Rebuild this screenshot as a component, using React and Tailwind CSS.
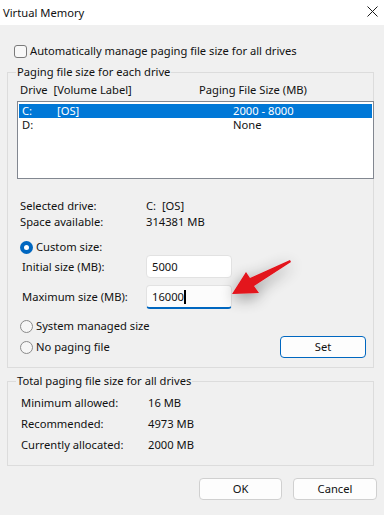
function Radio({ checked }) {
  return checked ? (
    <span className="w-[13px] h-[13px] rounded-full bg-[#0067c0] flex items-center justify-center shrink-0">
      <span className="w-[5px] h-[5px] rounded-full bg-white" />
    </span>
  ) : (
    <span className="w-[13px] h-[13px] rounded-full border border-[#8a8a8a] bg-[#f6f6f6] shrink-0" />
  )
}

function Group({ title, className, children }) {
  return (
    <div className={`relative ml-[7px] w-[367px] border border-[#dcdcdc] ${className}`}>
      <span className="absolute -top-[9px] left-[8px] bg-[#f0f0f0] px-[1px] leading-[16px]">{title}</span>
      {children}
    </div>
  )
}

export default function App() {
  return (
    <div
      className="relative w-[384px] h-[515px] bg-[#f0f0f0] text-[#111] text-[11.2px] leading-[16px] overflow-hidden"
      style={{ fontFamily: '"Noto Sans", "Open Sans", sans-serif' }}
    >
      {/* Title bar */}
      <div className="h-[25px] bg-white flex items-center justify-between pl-[3px] pr-[6px]">
        <span>Virtual Memory</span>
        <svg width="11" height="11" viewBox="0 0 11 11" className="mt-[-2px]">
          <path d="M0.5 0.5 L10.5 10.5 M10.5 0.5 L0.5 10.5" stroke="#1a1a1a" strokeWidth="1" />
        </svg>
      </div>

      {/* Auto manage */}
      <div className="mt-[18px] h-[16px] flex items-center pl-[14px] gap-[3px]">
        <span className="w-[13px] h-[13px] rounded-[3px] border border-[#7a7a7a] bg-[#f8f8f8]" />
        <span>Automatically manage paging file size for all drives</span>
      </div>

      {/* Per drive */}
      <Group title="Paging file size for each drive" className="mt-[13px] pt-[9px] pb-[9px]">
        <div className="h-[16px] flex pl-[12px]">
          <span className="w-[179px]">Drive&nbsp; [Volume Label]</span>
          <span>Paging File Size (MB)</span>
        </div>
        <div className="mt-[3px] ml-[9px] w-[357px] h-[78px] border border-[#828790] bg-white pt-[2px] px-[1px] leading-[14px]">
          <div className="h-[14px] bg-[#0078d7] text-white flex items-center">
            <span className="w-[38px] pl-[3px]">C:</span>
            <span className="w-[176px]">[OS]</span>
            <span>2000 - 8000</span>
          </div>
          <div className="h-[14px] flex items-center">
            <span className="w-[214px] pl-[3px]">D:</span>
            <span>None</span>
          </div>
        </div>

        <div className="mt-[19px] pl-[12px]">
          <div className="h-[16px] flex">
            <span className="w-[126px]">Selected drive:</span>
            <span>C:&nbsp; [OS]</span>
          </div>
          <div className="h-[16px] flex">
            <span className="w-[126px]">Space available:</span>
            <span>314381 MB</span>
          </div>
        </div>

        <div className="mt-[9px] h-[16px] flex items-center pl-[12px] gap-[3px]">
          <Radio checked />
          <span>Custom size:</span>
        </div>
        <div className="h-[23px] flex items-center pl-[14px]">
          <span className="w-[124px]">Initial size (MB):</span>
          <div className="w-[86px] h-[23px] bg-white border border-[#e2e2e2] rounded-[4px] flex items-center pl-[5px]">5000</div>
        </div>
        <div className="mt-[7px] h-[24px] flex items-center pl-[14px]">
          <span className="w-[124px]">Maximum size (MB):</span>
          <div className="w-[86px] h-[24px] bg-[#fcfcfc] border border-[#e2e2e2] border-b-2 border-b-[#0067c0] rounded-[4px] flex items-center pl-[5px]">
            16000<span className="w-[2px] h-[14px] bg-black" />
          </div>
        </div>

        <div className="mt-[9px] h-[16px] flex items-center pl-[12px] gap-[3px]">
          <Radio />
          <span>System managed size</span>
        </div>
        <div className="mt-[2px] h-[22px] flex items-center justify-between pl-[12px] pr-[7px]">
          <div className="flex items-center gap-[3px]">
            <Radio />
            <span>No paging file</span>
          </div>
          <button className="w-[86px] h-[22px] rounded-[4px] border border-[#0067c0] bg-[#fdfdfd]">Set</button>
        </div>
      </Group>

      {/* Totals */}
      <Group title="Total paging file size for all drives" className="mt-[13px] pt-[10px] pb-[10px]">
        {[
          ['Minimum allowed:', '16 MB'],
          ['Recommended:', '4973 MB'],
          ['Currently allocated:', '2000 MB'],
        ].map(([k, v]) => (
          <div key={k} className="h-[21px] flex items-center pl-[13px]">
            <span className="w-[127px]">{k}</span>
            <span>{v}</span>
          </div>
        ))}
      </Group>

      {/* Buttons */}
      <div className="mt-[12px] flex justify-end gap-[11px] pr-[7px]">
        <button className="w-[83px] h-[22px] rounded-[4px] border border-[#d0d0d0] bg-[#fdfdfd]">OK</button>
        <button className="w-[84px] h-[22px] rounded-[4px] border border-[#d0d0d0] bg-[#fdfdfd]">Cancel</button>
      </div>

      {/* Annotation arrow */}
      <svg className="absolute inset-0 pointer-events-none" width="384" height="515">
        <defs>
          <filter id="sh" x="-100%" y="-100%" width="300%" height="300%">
            <feGaussianBlur in="SourceAlpha" stdDeviation="8" />
            <feOffset dx="0" dy="4" />
            <feComponentTransfer>
              <feFuncA type="linear" slope="0.45" />
            </feComponentTransfer>
            <feMerge>
              <feMergeNode />
              <feMergeNode in="SourceGraphic" />
            </feMerge>
          </filter>
        </defs>
        <polygon
          points="232,294 246,272 250,278 290,260 291,262 254,286 259,293"
          fill="#e3121b"
          filter="url(#sh)"
        />
      </svg>
    </div>
  )
}
